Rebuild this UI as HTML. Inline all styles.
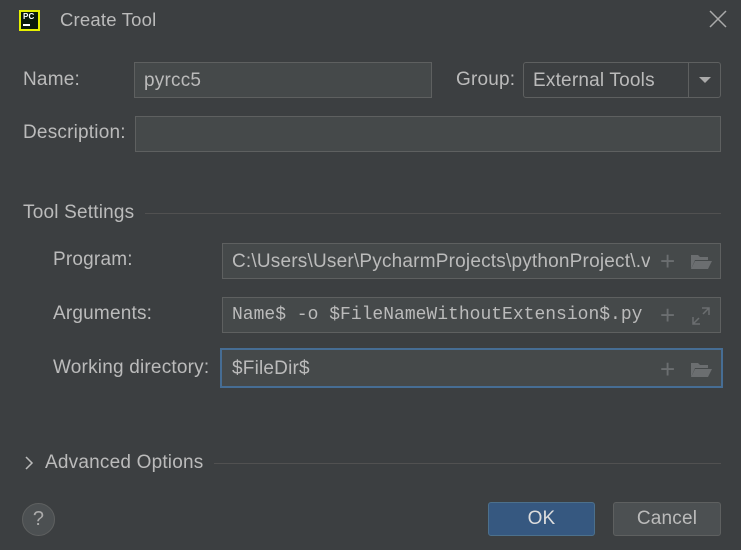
<!DOCTYPE html><html><head><style>
body{margin:0;width:741px;height:550px;background:#3c3f41;font-family:"Liberation Sans",sans-serif;color:#bbbbbb;font-size:19px;letter-spacing:0.2px;position:relative;overflow:hidden}
.a{position:absolute}
.f{position:absolute;background:#45494a;border:1px solid #5e6060;box-sizing:border-box}
.l{position:absolute;line-height:20px}
.t{position:absolute;left:9px;top:7px;white-space:nowrap;overflow:hidden}
.m{font-family:"Liberation Mono",monospace;font-size:18px;letter-spacing:0}
.ic{position:absolute;color:#6b6e70}
</style></head><body>
<div class="a" style="left:19px;top:10px;width:21px;height:21px;background:#e6f000"><div class="a" style="left:2px;top:2px;width:17px;height:17px;background:#0b1a0b"><div class="a" style="left:2px;top:0;font-size:8px;font-weight:bold;color:#fff">PC</div><div class="a" style="left:2px;top:12px;width:7px;height:2px;background:#fff"></div></div></div>
<div class="l" style="left:60px;top:10px;font-size:18.5px">Create Tool</div>
<svg class="a" style="left:709px;top:10px" width="18" height="18"><path d="M1 1L17 17M17 1L1 17" stroke="#aaa" stroke-width="1.5"/></svg>
<div class="l" style="left:23px;top:70px">Name:</div>
<div class="f" style="left:134px;top:62px;width:298px;height:36px"><div class="t">pyrcc5</div></div>
<div class="l" style="left:456px;top:70px">Group:</div>
<div class="f" style="left:523px;top:62px;width:198px;height:36px;border-radius:3px;background:#3c3f41;border-color:#5e6060"><div class="t">External Tools</div><div class="a" style="left:164px;top:0;width:1px;height:34px;background:#5e6060"></div><div class="a" style="left:175px;top:14px;border-left:6px solid transparent;border-right:6px solid transparent;border-top:6px solid #aaa"></div></div>
<div class="l" style="left:23px;top:123px">Description:</div>
<div class="f" style="left:135px;top:116px;width:586px;height:36px"></div>
<div class="l" style="left:23px;top:203px">Tool Settings</div>
<div class="a" style="left:145px;top:213px;width:576px;height:1px;background:#515151"></div>
<div class="l" style="left:53px;top:250px">Program:</div>
<div class="f" style="left:222px;top:243px;width:499px;height:36px"><div class="t" style="width:418px">C:\Users\User\PycharmProjects\pythonProject\.venv</div><div class="ic" style="left:437px;top:2px;font-size:26px">+</div><svg class="a" style="left:467px;top:9px" width="22" height="17"><path d="M1 2h7l2 2h8v3H5L1 16z" fill="#6b6e70"/><path d="M5 8h17l-4 8H1z" fill="#6b6e70"/></svg></div>
<div class="l" style="left:53px;top:304px">Arguments:</div>
<div class="f" style="left:222px;top:297px;width:499px;height:36px"><div class="t m" style="width:420px;top:7px">Name$ -o $FileNameWithoutExtension$.py</div><div class="ic" style="left:437px;top:2px;font-size:26px">+</div><svg class="a" style="left:468px;top:8px" width="20" height="20"><path d="M11 2h7v7M18 2l-6 6M9 18H2v-7M2 18l6-6" stroke="#6b6e70" stroke-width="1.5" fill="none"/></svg></div>
<div class="l" style="left:53px;top:358px">Working directory:</div>
<div class="f" style="left:220px;top:348px;width:503px;height:40px;border:2px solid #466d94"><div class="t" style="left:10px;top:8px">$FileDir$</div><div class="ic" style="left:438px;top:4px;font-size:26px">+</div><svg class="a" style="left:468px;top:11px" width="22" height="17"><path d="M1 2h7l2 2h8v3H5L1 16z" fill="#6b6e70"/><path d="M5 8h17l-4 8H1z" fill="#6b6e70"/></svg></div>
<svg class="a" style="left:24px;top:456px" width="10" height="14"><path d="M2 1l6 6-6 6" stroke="#bbb" stroke-width="1.5" fill="none"/></svg>
<div class="l" style="left:45px;top:453px">Advanced Options</div>
<div class="a" style="left:214px;top:463px;width:507px;height:1px;background:#515151"></div>
<div class="a" style="left:22px;top:503px;width:33px;height:33px;border-radius:50%;background:#4c5052;border:1px solid #5e6060;box-sizing:border-box;text-align:center;line-height:31px;font-size:20px;color:#aaa">?</div>
<div class="a" style="left:488px;top:502px;width:107px;height:34px;background:#365880;border:1px solid #4c708c;box-sizing:border-box;border-radius:3px;text-align:center;line-height:32px;color:#ddd">OK</div>
<div class="a" style="left:613px;top:502px;width:108px;height:34px;background:#4c5052;border:1px solid #5e6060;box-sizing:border-box;border-radius:3px;text-align:center;line-height:32px">Cancel</div>
</body></html>
